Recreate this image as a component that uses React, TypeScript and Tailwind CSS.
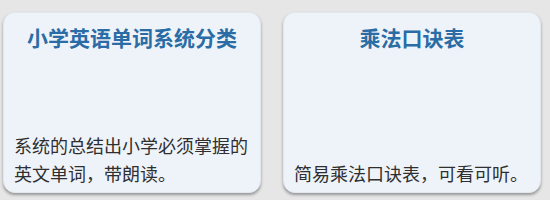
import React from 'react';

interface Item {
  title: string;
  desc: string;
}

const items: Item[] = [
  { title: '小学英语单词系统分类', desc: '系统的总结出小学必须掌握的英文单词，带朗读。' },
  { title: '乘法口诀表', desc: '简易乘法口诀表，可看可听。' },
];

export default function App() {
  return (
    <div
      className="w-[550px] h-[200px] bg-[#e6e6e6] pt-[12px] pl-[3px] flex gap-[22px]"
      style={{ fontFamily: '"Noto Sans CJK SC", "Noto Sans", sans-serif' }}
    >
      {items.map((it, i) => (
        <div
          key={i}
          className="w-[258px] h-[181px] rounded-[12px] bg-[#eef3f9] border border-[#e2e7ee] shadow-[0_2px_3px_rgba(0,0,0,0.35)] flex flex-col justify-between px-[10px] pt-[9px] pb-[5px]"
        >
          <div className="text-center text-[21px] leading-[30px] font-bold text-[#2a6ca5]">{it.title}</div>
          <div className="text-[18px] leading-[28px] text-[#2f2f2f]">{it.desc}</div>
        </div>
      ))}
    </div>
  );
}
